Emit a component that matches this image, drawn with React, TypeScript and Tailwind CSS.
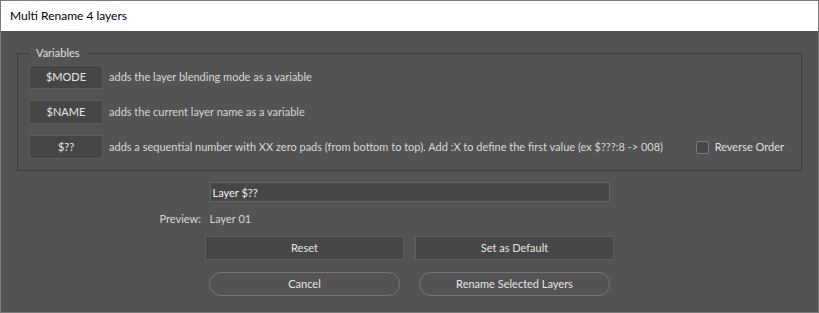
import { useState } from "react";

const FONT = { fontFamily: 'Lato, "Noto Sans", sans-serif' };

const VARIABLES = [
  { token: "$MODE", text: "adds the layer blending mode as a variable" },
  { token: "$NAME", text: "adds the current layer name as a variable" },
  {
    token: "$??",
    text: "adds a sequential number with XX zero pads (from bottom to top). Add :X to define the first value (ex $???:8 -> 008)",
  },
];

const VariableRow = ({
  token,
  text,
  children,
}: {
  token: string;
  text: string;
  children?: React.ReactNode;
}) => (
  <div className="flex h-6 items-center">
    <button className="h-6 w-[74px] shrink-0 border border-[#5c5c5c] bg-[#464646] text-[11px] text-[#e6e6e6]">
      {token}
    </button>
    <span className="ml-[6px] whitespace-nowrap text-[11px] text-[#d8d8d8]">{text}</span>
    {children}
  </div>
);

export default function App() {
  const [pattern, setPattern] = useState("Layer $??");
  const [reverse, setReverse] = useState(false);

  return (
    <div
      className="flex h-[313px] w-[819px] flex-col border border-[#7a7a7a] bg-[#535353]"
      style={FONT}
    >
      <div className="flex h-[30px] shrink-0 items-center bg-white pl-[9px] text-[12px] text-black">
        Multi Rename 4 layers
      </div>

      <fieldset className="mx-[16px] mt-[14px] flex min-w-0 flex-col gap-[11px] border border-[#3d3d3d] px-[11px] pb-[11px] pt-[4px]">
        <legend className="px-[7px] text-[11px] leading-4 text-[#e0e0e0]">Variables</legend>
        <VariableRow {...VARIABLES[0]} />
        <VariableRow {...VARIABLES[1]} />
        <VariableRow {...VARIABLES[2]}>
          <label className="ml-auto mr-[6px] flex items-center gap-[6px] whitespace-nowrap text-[11px] text-[#e0e0e0]">
            <span
              onClick={() => setReverse(!reverse)}
              className="h-[13px] w-[13px] rounded-[2px] border border-[#7a7a7a] bg-[#474747]"
            />
            Reverse Order
          </label>
        </VariableRow>
      </fieldset>

      <div className="mt-[11px] flex flex-col items-center">
        <input
          value={pattern}
          onChange={(e) => setPattern(e.target.value)}
          className="h-5 w-[400px] border border-[#626262] bg-[#464646] px-[2px] text-[11px] text-[#f0f0f0] outline-none"
        />
        <div className="mt-[8px] flex h-[18px] w-[500px] items-center text-[11px] text-[#d8d8d8]">
          <span className="w-[50px]">Preview:</span>
          <span>Layer 01</span>
        </div>
        <div className="mt-[8px] flex gap-[11px]">
          <button className="h-6 w-[199px] border border-[#5e5e5e] bg-[#464646] text-[11px] text-[#e6e6e6]">
            Reset
          </button>
          <button className="h-6 w-[199px] border border-[#5e5e5e] bg-[#464646] text-[11px] text-[#e6e6e6]">
            Set as Default
          </button>
        </div>
        <div className="mt-[12px] flex gap-[19px]">
          <button className="h-6 w-[191px] rounded-full border border-[#767676] text-[11px] text-[#e6e6e6]">
            Cancel
          </button>
          <button className="h-6 w-[191px] rounded-full border border-[#767676] text-[11px] text-[#e6e6e6]">
            Rename Selected Layers
          </button>
        </div>
      </div>
    </div>
  );
}
